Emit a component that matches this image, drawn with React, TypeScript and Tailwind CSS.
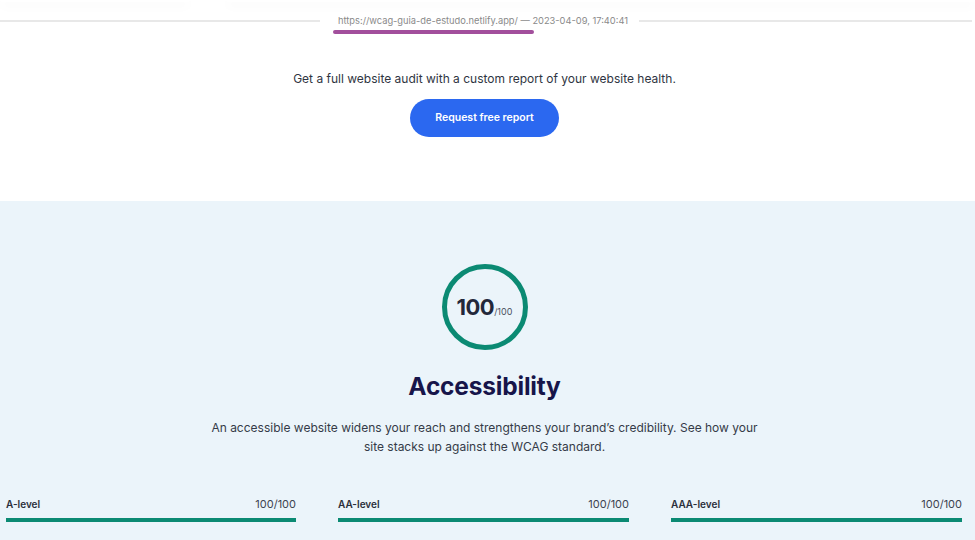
export default function App() {
  const levels = [
    { name: 'A-level', score: '100/100' },
    { name: 'AA-level', score: '100/100' },
    { name: 'AAA-level', score: '100/100' },
  ];

  return (
    <div className="w-[975px] h-[540px] overflow-hidden bg-white font-['Inter',sans-serif] text-[#2d3340]">
      {/* faint bottoms of the cards above */}
      <div className="flex gap-[36px] h-[12px]">
        <div className="w-[190px] h-[2px] bg-white rounded-b-xl shadow-[0_3px_12px_rgba(0,0,0,0.07)]" />
        <div className="flex-1 h-[2px] bg-white rounded-b-xl shadow-[0_3px_12px_rgba(0,0,0,0.07)]" />
      </div>

      {/* url + date divider */}
      <div className="flex items-center h-[18px]">
        <div className="w-[320px] h-[2px] bg-[#e8e8e8]" />
        <div className="relative pl-[18px] pr-[11px] text-[9.3px] leading-[14px] text-[#8a8a8a] whitespace-nowrap">
          https://wcag-guia-de-estudo.netlify.app/ — 2023-04-09, 17:40:41
          <div className="absolute left-[13px] top-[16px] w-[201px] h-[4px] rounded-full bg-[#a24f9c]" />
        </div>
        <div className="flex-1 h-[2px] bg-[#e8e8e8] mr-[3px]" />
      </div>

      {/* audit call-out */}
      <div className="flex flex-col items-center pt-[40px] h-[171px] mr-[6px]">
        <p className="text-[12px] leading-[18px] text-[#2f3542]">
          Get a full website audit with a custom report of your website health.
        </p>
        <button className="mt-[11px] w-[149px] h-[38px] rounded-full bg-[#2b68f0] text-white text-[10.5px] font-semibold">
          Request free report
        </button>
      </div>

      {/* accessibility section */}
      <section className="bg-[#ebf4fa] h-[339px] pt-[63px]">
        <div className="flex flex-col items-center mr-[6px]">
          <div className="w-[86px] h-[86px] rounded-full border-[5px] border-[#0b8a73] flex items-center justify-center">
            <span className="flex items-baseline">
              <span className="text-[22px] font-bold text-[#23283a] tracking-tight">100</span>
              <span className="text-[9px] text-[#4a5060]">/100</span>
            </span>
          </div>
          <h2 className="mt-[19px] text-[24.5px] leading-[34px] font-bold text-[#17154a] tracking-[-0.2px]">
            Accessibility
          </h2>
          <p className="mt-[15px] w-[560px] text-center text-[12px] leading-[19px] text-[#353b48]">
            An accessible website widens your reach and strengthens your brand’s credibility. See how your site stacks up against the WCAG standard.
          </p>
        </div>

        <div className="mt-[41px] pl-[6px] grid grid-cols-[290px_291px_291px] gap-x-[42px]">
          {levels.map((l) => (
            <div key={l.name}>
              <div className="flex justify-between items-end leading-[14px]">
                <span className="text-[10px] font-semibold text-[#2a2f3b]">{l.name}</span>
                <span className="text-[11px] text-[#3d4350]">{l.score}</span>
              </div>
              <div className="mt-[7px] h-[4px] bg-[#0b8a73]" />
            </div>
          ))}
        </div>
      </section>
    </div>
  );
}
